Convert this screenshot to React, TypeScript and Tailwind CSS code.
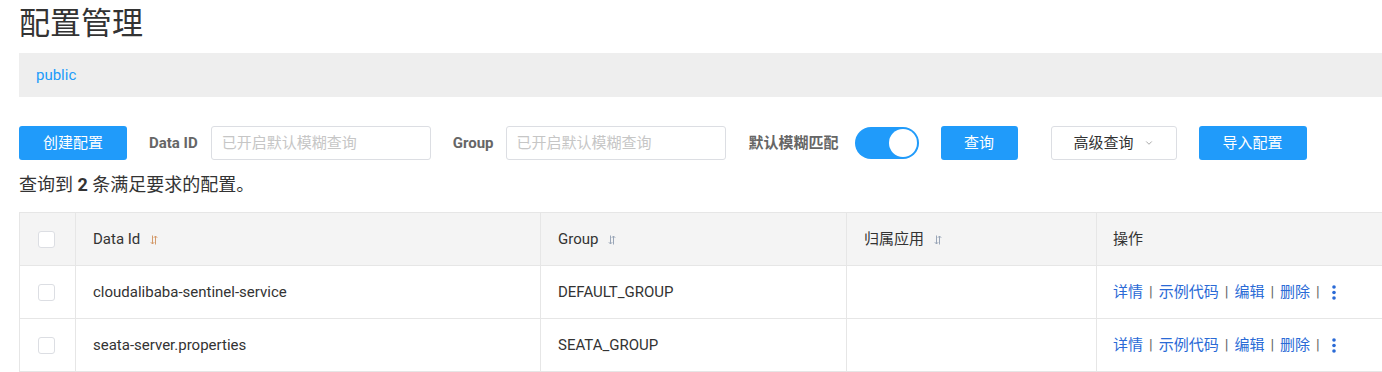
import { ChevronDown } from 'lucide-react';

const FONT = '[font-family:Roboto,"Helvetica_Neue","Noto_Sans_CJK_SC",sans-serif]';

const ROWS = [
  { dataId: 'cloudalibaba-sentinel-service', group: 'DEFAULT_GROUP', app: '' },
  { dataId: 'seata-server.properties', group: 'SEATA_GROUP', app: '' },
];

// small sort glyph used in table headers
function SortIcon({ color = '#9aa6b8' }: { color?: string }) {
  return (
    <svg width="8" height="10" viewBox="0 0 8 10" className="ml-[10px] mt-[2px]">
      <path d="M2.5 0.5 V9 M0.8 7.2 L2.5 9 L4.2 7.2" stroke={color} strokeWidth="1" fill="none" />
      <path d="M5.5 9.5 V1 M3.8 2.8 L5.5 1 L7.2 2.8" stroke={color} strokeWidth="1" fill="none" />
    </svg>
  );
}

function Checkbox() {
  return <div className="w-[17px] h-[17px] rounded-[3px] border border-[#dcdee3] bg-white" />;
}

function Actions() {
  const links = ['详情', '示例代码', '编辑', '删除'];
  return (
    <div className="flex items-center text-[15px] text-[#2a6ad6]">
      {links.map((l) => (
        <span key={l} className="flex items-center">
          <span>{l}</span>
          <span className="mx-[6px] text-[#666]">|</span>
        </span>
      ))}
      <svg width="4" height="17" viewBox="0 0 4 17" className="ml-[6px]">
        <circle cx="2" cy="3" r="1.8" fill="#2a6ad6" />
        <circle cx="2" cy="8.5" r="1.8" fill="#2a6ad6" />
        <circle cx="2" cy="14" r="1.8" fill="#2a6ad6" />
      </svg>
    </div>
  );
}

export default function App() {
  return (
    <div className={`w-[1382px] h-[372px] overflow-hidden bg-white ${FONT}`}>
      <div className="pl-[19px] w-[1400px]">
        {/* Title */}
        <h1 className="h-[48px] leading-[48px] mb-[5px] text-[31px] font-normal text-[#333]">配置管理</h1>

        {/* Namespace bar */}
        <div className="h-[44px] flex items-center pl-[17px] bg-[#eeeeee] w-[1363px]">
          <span className="text-[15px] text-[#209bfa]">public</span>
        </div>

        {/* Toolbar */}
        <div className="mt-[29px] flex items-center h-[34px] text-[15px]">
          <button className="w-[108px] h-[34px] rounded-[3px] bg-[#209bfa] text-white">创建配置</button>
          <span className="ml-[22px] font-bold text-[#666]">Data ID</span>
          <div className="ml-[13px] w-[220px] h-[34px] border border-[#dcdee3] rounded-[3px] flex items-center pl-[10px] text-[#c6c6c6]">
            已开启默认模糊查询
          </div>
          <span className="ml-[22px] font-bold text-[#666]">Group</span>
          <div className="ml-[12px] w-[220px] h-[34px] border border-[#dcdee3] rounded-[3px] flex items-center pl-[10px] text-[#c6c6c6]">
            已开启默认模糊查询
          </div>
          <span className="ml-[23px] font-bold text-[#666]">默认模糊匹配</span>
          <div className="ml-[16px] w-[64px] h-[32px] rounded-full bg-[#209bfa] flex items-center justify-end pr-[2px]">
            <div className="w-[28px] h-[28px] rounded-full bg-white" />
          </div>
          <button className="ml-[22px] w-[77px] h-[34px] rounded-[3px] bg-[#209bfa] text-white">查询</button>
          <button className="ml-[33px] w-[126px] h-[34px] rounded-[3px] border border-[#dcdee3] bg-white text-[#333] flex items-center justify-center gap-[10px]">
            高级查询
            <ChevronDown className="w-[10px] h-[10px] text-[#999]" strokeWidth={2} />
          </button>
          <button className="ml-[22px] w-[108px] h-[34px] rounded-[3px] bg-[#209bfa] text-white">导入配置</button>
        </div>

        {/* Result count */}
        <div className="mt-[14px] h-[22px] leading-[22px] text-[18px] text-[#333]">
          查询到 <strong className="font-bold">2</strong> 条满足要求的配置。
        </div>

        {/* Table */}
        <div className="mt-[16px] w-[1380px] border-t border-l border-[#e6e6e6] text-[15px] text-[#333]">
          <div className="grid grid-cols-[56px_465px_306px_250px_1fr] h-[53px] bg-[#f4f4f4] border-b border-[#e6e6e6]">
            <div className="flex items-center pl-[18px] border-r border-[#e6e6e6]"><Checkbox /></div>
            <div className="flex items-center pl-[17px] border-r border-[#e6e6e6]">Data Id<SortIcon color="#d49a6a" /></div>
            <div className="flex items-center pl-[17px] border-r border-[#e6e6e6]">Group<SortIcon /></div>
            <div className="flex items-center pl-[17px] border-r border-[#e6e6e6]">归属应用<SortIcon /></div>
            <div className="flex items-center pl-[16px]">操作</div>
          </div>
          {ROWS.map((r) => (
            <div key={r.dataId} className="grid grid-cols-[56px_465px_306px_250px_1fr] h-[53px] border-b border-[#e6e6e6]">
              <div className="flex items-center pl-[18px] border-r border-[#e6e6e6]"><Checkbox /></div>
              <div className="flex items-center pl-[17px] border-r border-[#e6e6e6]">{r.dataId}</div>
              <div className="flex items-center pl-[17px] border-r border-[#e6e6e6]">{r.group}</div>
              <div className="flex items-center pl-[17px] border-r border-[#e6e6e6]">{r.app}</div>
              <div className="flex items-center pl-[16px]"><Actions /></div>
            </div>
          ))}
        </div>
      </div>
    </div>
  );
}
